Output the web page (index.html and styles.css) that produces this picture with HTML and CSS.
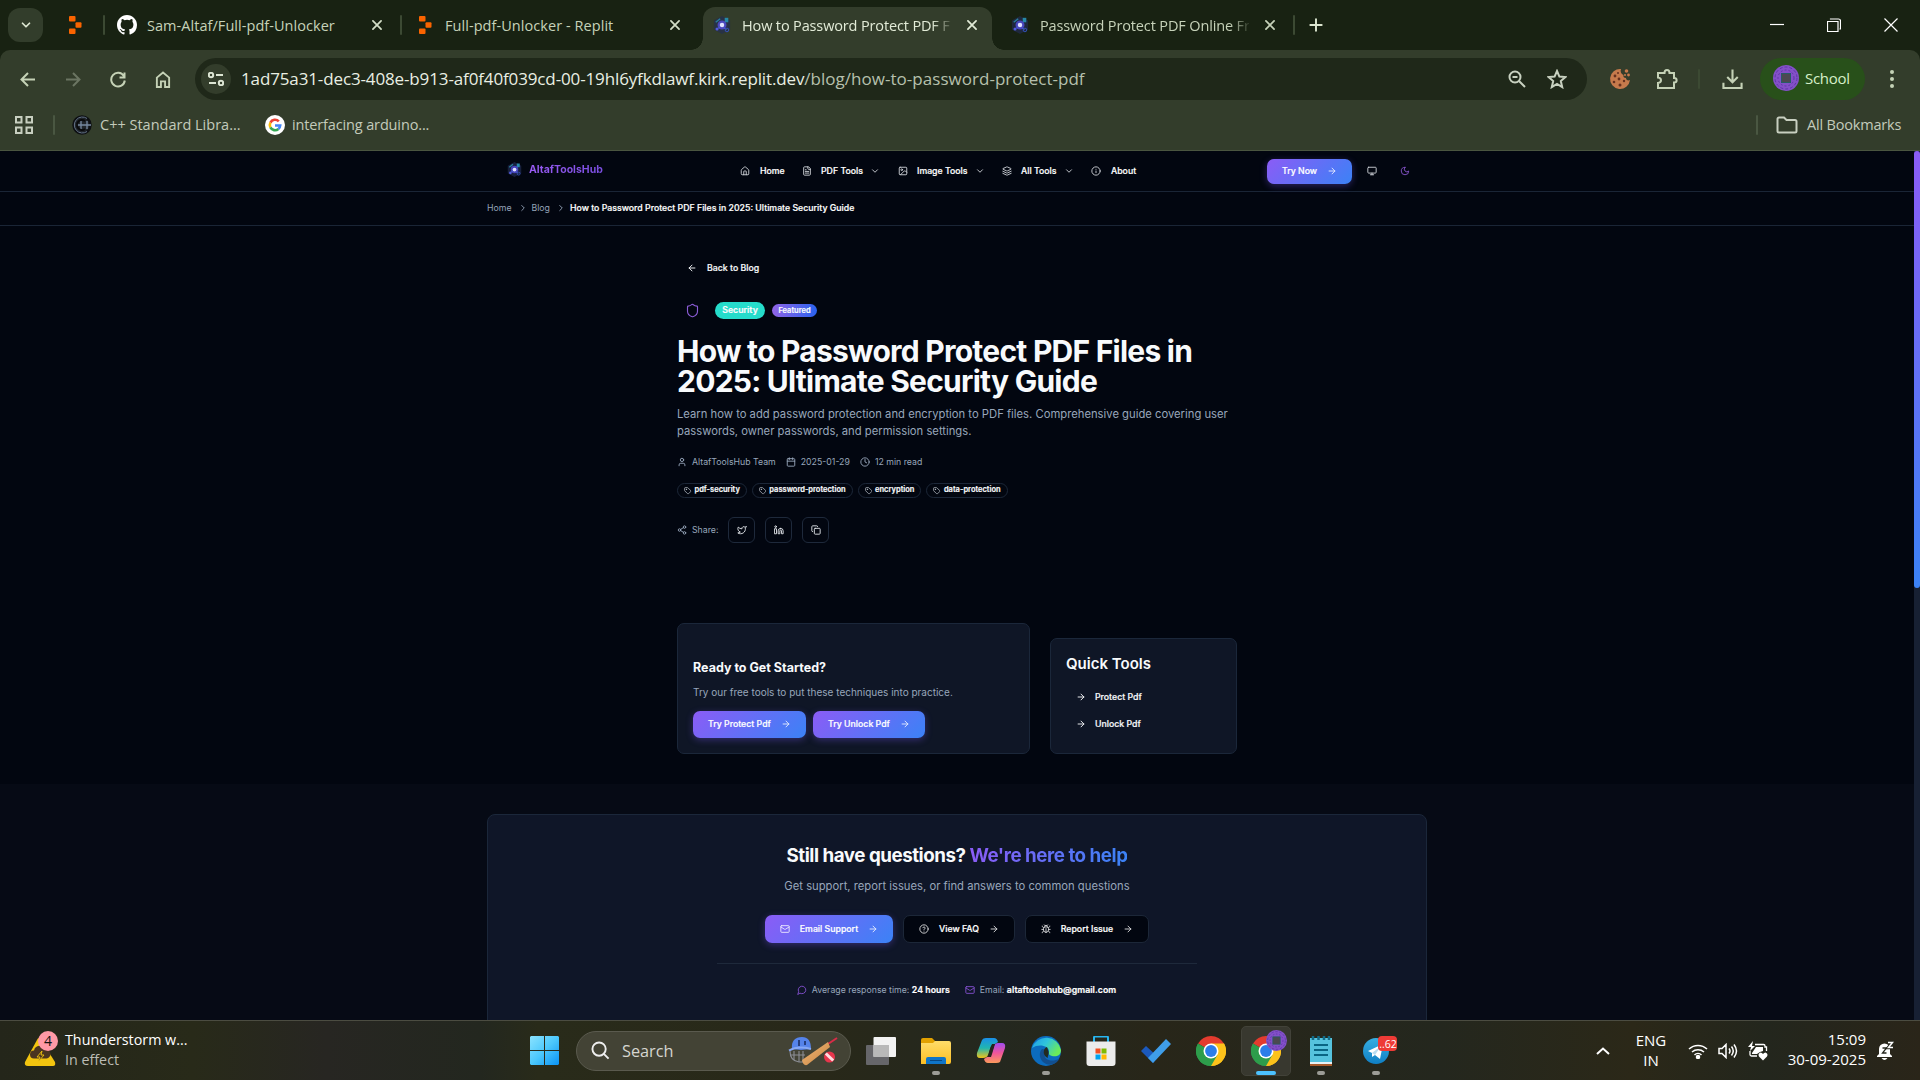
FILE: index.html
```html
<!DOCTYPE html>
<html lang="en">
<head>
<meta charset="utf-8">
<title>How to Password Protect PDF Files in 2025: Ultimate Security Guide</title>
<link rel="stylesheet" href="styles.css">
</head>
<body>
<svg class="defs" width="0" height="0">
  <defs>
    <linearGradient id="gWin" x1="0" y1="0" x2="1" y2="1"><stop offset="0" stop-color="#8be3ff"/><stop offset=".5" stop-color="#4cc8fc"/><stop offset="1" stop-color="#0a93f5"/></linearGradient>
    <linearGradient id="gFolder" x1="0" y1="0" x2="0" y2="1"><stop offset="0" stop-color="#ffdd6a"/><stop offset="1" stop-color="#fcbf24"/></linearGradient>
    <linearGradient id="gEdge" x1="0" y1="0" x2="1" y2=".5"><stop offset="0" stop-color="#1f9ae8"/><stop offset=".5" stop-color="#2fc4dc"/><stop offset="1" stop-color="#6bec5a"/></linearGradient>
    <linearGradient id="gTele" x1="0" y1="0" x2="0" y2="1"><stop offset="0" stop-color="#37aee2"/><stop offset="1" stop-color="#0f7fc4"/></linearGradient>
    <linearGradient id="gCop1" x1="0" y1="0" x2="0" y2="1"><stop offset="0" stop-color="#1a8fe8"/><stop offset=".5" stop-color="#20b6b0"/><stop offset="1" stop-color="#f0c419"/></linearGradient>
    <linearGradient id="gCop2" x1="0" y1="0" x2="0" y2="1"><stop offset="0" stop-color="#a04cf0"/><stop offset=".5" stop-color="#f0559a"/><stop offset="1" stop-color="#fb9a5c"/></linearGradient>
    <linearGradient id="gBat" x1="0" y1="0" x2="1" y2="1"><stop offset="0" stop-color="#f0b878"/><stop offset="1" stop-color="#c98440"/></linearGradient>
  </defs>
  <symbol id="arrow-r" viewBox="0 0 24 24"><path d="M5 12h14M12 5l7 7-7 7"/></symbol>
  <symbol id="arrow-l" viewBox="0 0 24 24"><path d="M19 12H5M12 19l-7-7 7-7"/></symbol>
  <symbol id="chev-d" viewBox="0 0 24 24"><path d="M6 9l6 6 6-6"/></symbol>
  <symbol id="chev-r" viewBox="0 0 24 24"><path d="M9 18l6-6-6-6"/></symbol>
  <symbol id="x" viewBox="0 0 24 24"><path d="M5 5l14 14M19 5L5 19"/></symbol>
  <symbol id="house" viewBox="0 0 24 24"><path d="M15 21v-8a1 1 0 0 0-1-1h-4a1 1 0 0 0-1 1v8"/><path d="M3 10a2 2 0 0 1 .7-1.5l7-6a2 2 0 0 1 2.6 0l7 6A2 2 0 0 1 21 10v9a2 2 0 0 1-2 2H5a2 2 0 0 1-2-2z"/></symbol>
  <symbol id="file" viewBox="0 0 24 24"><path d="M15 2H6a2 2 0 0 0-2 2v16a2 2 0 0 0 2 2h12a2 2 0 0 0 2-2V7z"/><path d="M14 2v4a2 2 0 0 0 2 2h4M10 9H8M16 13H8M16 17H8"/></symbol>
  <symbol id="image" viewBox="0 0 24 24"><rect x="3" y="3" width="18" height="18" rx="2"/><circle cx="9" cy="9" r="2"/><path d="M21 15l-3.1-3.1a2 2 0 0 0-2.8 0L6 21"/></symbol>
  <symbol id="layers" viewBox="0 0 24 24"><path d="M12.8 2.2a2 2 0 0 0-1.6 0L2.6 6.1a1 1 0 0 0 0 1.8l8.6 3.9a2 2 0 0 0 1.6 0l8.6-3.9a1 1 0 0 0 0-1.8z"/><path d="M22 17.6l-9.2 4.2a2 2 0 0 1-1.6 0L2 17.6M22 12.6l-9.2 4.2a2 2 0 0 1-1.6 0L2 12.6"/></symbol>
  <symbol id="info" viewBox="0 0 24 24"><circle cx="12" cy="12" r="10"/><path d="M12 16v-4M12 8h.01"/></symbol>
  <symbol id="monitor" viewBox="0 0 24 24"><rect x="2" y="3" width="20" height="14" rx="2"/><path d="M8 21h8M12 17v4"/></symbol>
  <symbol id="moon" viewBox="0 0 24 24"><path d="M12 3a6 6 0 0 0 9 9 9 9 0 1 1-9-9z"/></symbol>
  <symbol id="shield" viewBox="0 0 24 24"><path d="M20 13c0 5-3.5 7.5-7.7 9a1 1 0 0 1-.6 0C7.500 20.500 4 18 4 13V6a1 1 0 0 1 1-1c2 0 4.500-1.200 6.200-2.700a1.200 1.200 0 0 1 1.500 0C14.500 3.800 17 5 19 5a1 1 0 0 1 1 1z"/></symbol>
  <symbol id="user" viewBox="0 0 24 24"><path d="M19 21v-2a4 4 0 0 0-4-4H9a4 4 0 0 0-4 4v2"/><circle cx="12" cy="7" r="4"/></symbol>
  <symbol id="calendar" viewBox="0 0 24 24"><path d="M8 2v4M16 2v4M3 10h18"/><rect x="3" y="4" width="18" height="18" rx="2"/></symbol>
  <symbol id="clock" viewBox="0 0 24 24"><circle cx="12" cy="12" r="10"/><path d="M12 6v6l4 2"/></symbol>
  <symbol id="tag" viewBox="0 0 24 24"><path d="M12.600 2.600A2 2 0 0 0 11.200 2H4a2 2 0 0 0-2 2v7.200a2 2 0 0 0 .6 1.400l8.700 8.700a2.400 2.400 0 0 0 3.400 0l6.600-6.600a2.400 2.400 0 0 0 0-3.400z"/><circle cx="7.500" cy="7.500" r=".8"/></symbol>
  <symbol id="share" viewBox="0 0 24 24"><circle cx="18" cy="5" r="3"/><circle cx="6" cy="12" r="3"/><circle cx="18" cy="19" r="3"/><path d="M8.600 13.500l6.800 4M15.400 6.500l-6.800 4"/></symbol>
  <symbol id="twitter" viewBox="0 0 24 24"><path d="M22 4s-.7 2.100-2 3.400c1.600 10-9.400 17.300-18 11.600 2.200.1 4.400-.6 6-2C3 15.500.5 9.600 3 5c2.200 2.600 5.600 4.100 9 4-.9-4.200 4-6.600 7-3.800 1.100 0 3-1.200 3-1.200z"/></symbol>
  <symbol id="linkedin" viewBox="0 0 24 24"><path d="M16 8a6 6 0 0 1 6 6v7h-4v-7a2 2 0 0 0-4 0v7h-4v-7a6 6 0 0 1 6-6z"/><rect x="2" y="9" width="4" height="12"/><circle cx="4" cy="4" r="2"/></symbol>
  <symbol id="copy" viewBox="0 0 24 24"><rect x="8" y="8" width="14" height="14" rx="2"/><path d="M4 16c-1.100 0-2-.9-2-2V4c0-1.100.9-2 2-2h10c1.100 0 2 .9 2 2"/></symbol>
  <symbol id="mail" viewBox="0 0 24 24"><rect x="2" y="4" width="20" height="16" rx="2"/><path d="M22 7l-9 5.700a2 2 0 0 1-2 0L2 7"/></symbol>
  <symbol id="help" viewBox="0 0 24 24"><circle cx="12" cy="12" r="10"/><path d="M9.100 9a3 3 0 0 1 5.800 1c0 2-3 3-3 3M12 17h.01"/></symbol>
  <symbol id="bug" viewBox="0 0 24 24"><path d="M8 2l1.900 1.900M14.100 3.900L16 2M9 7.100v-1a3 3 0 1 1 6 0v1M12 20c-3.300 0-6-2.700-6-6v-3a4 4 0 0 1 4-4h4a4 4 0 0 1 4 4v3c0 3.300-2.700 6-6 6M12 20v-9M6.500 9C4.600 8.800 3 7.100 3 5M6 13H2M3 21c0-2.100 1.700-3.900 3.800-4M21 5c0 2.100-1.600 3.800-3.500 4M22 13h-4M17.200 17c2.100.1 3.800 1.900 3.800 4"/></symbol>
  <symbol id="message" viewBox="0 0 24 24"><path d="M7.900 20A9 9 0 1 0 4 16.100L2 22z"/></symbol>
  <symbol id="replit" viewBox="0 0 14 20"><g fill="#fa6400"><rect x="1" y="1" width="6.500" height="5.600" rx="1"/><rect x="7.500" y="7.200" width="6" height="5.600" rx="1"/><rect x="1" y="13.400" width="6.500" height="5.600" rx="1"/></g></symbol>
  <symbol id="hub" viewBox="0 0 20 20"><path d="M10 0l9 5v10l-9 5-9-5V5z" fill="#232c55" opacity=".65"/><path d="M13 2h4v5h-4z" fill="#2688a8"/><path d="M3 7l5-4" stroke="#287f9d" stroke-width="1.600"/><circle cx="10" cy="10" r="5" fill="#5750e8" opacity=".75"/><circle cx="10" cy="10" r="2.500" fill="#dfe2ff"/><path d="M5 14l3-2M12 13l3 2" stroke="#4761d8"/><circle cx="4.500" cy="14.500" r="1.700" fill="#525be0"/><circle cx="15.500" cy="15.500" r="2" fill="none" stroke="#3556c6"/></symbol>
  <symbol id="avatar" viewBox="0 0 26 26"><circle cx="13" cy="13" r="13" fill="#8350c8"/><g fill="none" stroke="#5f36a6" stroke-width="1"><circle cx="13" cy="13" r="11" stroke-dasharray="3 2"/><circle cx="13" cy="13" r="8" stroke-dasharray="2 2"/></g><rect x="8.500" y="8.500" width="9" height="9" fill="#4b4950" stroke="#265c66"/></symbol>
  <symbol id="chrome" viewBox="0 0 30 30"><path d="M15 15L2.010 7.500A15 15 0 0 1 27.990 7.500z" fill="#e33b2e"/><path d="M15 15L27.990 7.500A15 15 0 0 1 15 30z" fill="#fcc21b"/><path d="M15 15v15A15 15 0 0 1 2.010 7.500z" fill="#2d9d4b"/><path d="M15 7.500h13a15 15 0 0 1-13 22.500l6.500-11.250z" fill="#fcc21b"/><path d="M2 7.500L8.500 18.750 21.500 18.750 15 30A15 15 0 0 1 2 7.500z" fill="#2d9d4b"/><circle cx="15" cy="15" r="7.500" fill="#fff"/><circle cx="15" cy="15" r="5.900" fill="#2b7de9"/></symbol>
</svg>

<div class="browser">
  <header class="tabs">
    <div class="tab-search"><svg class="ic i14 w3"><use href="#chev-d"/></svg></div>
    <div class="tab pinned"><svg class="rep"><use href="#replit"/></svg></div>
    <i class="sep"></i>
    <div class="tab t1"><svg class="gh" viewBox="0 0 16 16"><path fill="#fff" d="M8 0C3.580 0 0 3.580 0 8c0 3.540 2.290 6.530 5.470 7.590.4.070.55-.17.55-.38 0-.19-.01-.82-.01-1.490-2.010.37-2.530-.49-2.690-.94-.09-.23-.48-.94-.82-1.130-.28-.15-.68-.52-.01-.53.63-.01 1.080.58 1.230.82.72 1.210 1.870.87 2.330.66.070-.52.28-.87.51-1.070-1.780-.2-3.640-.89-3.640-3.950 0-.87.31-1.590.82-2.150-.08-.2-.36-1.020.08-2.120 0 0 .67-.21 2.200.82a7.600 7.600 0 0 1 4 0c1.530-1.040 2.200-.82 2.200-.82.44 1.100.16 1.920.08 2.120.51.56.82 1.270.82 2.150 0 3.070-1.870 3.750-3.650 3.950.29.25.54.73.54 1.480 0 1.070-.01 1.930-.01 2.200 0 .21.15.46.55.38A8 8 0 0 0 16 8c0-4.420-3.580-8-8-8z"/></svg><span class="ttl a">Sam-Altaf/Full-pdf-Unlocker</span><svg class="ic i14 w3"><use href="#x"/></svg></div>
    <i class="sep"></i>
    <div class="tab t2"><svg class="rep"><use href="#replit"/></svg><span class="ttl b">Full-pdf-Unlocker - Replit</span><svg class="ic i14 w3"><use href="#x"/></svg></div>
    <div class="tab t3 active"><svg class="fav"><use href="#hub"/></svg><span class="ttl c">How to Password Protect PDF Fi</span><svg class="ic i14 w3"><use href="#x"/></svg></div>
    <div class="tab t4"><svg class="fav"><use href="#hub"/></svg><span class="ttl d">Password Protect PDF Online Fr</span><svg class="ic i14 w3"><use href="#x"/></svg></div>
    <i class="sep"></i>
    <svg class="ic plus" viewBox="0 0 16 16"><path d="M8 1.500v13M1.500 8h13"/></svg>
    <div class="wincontrols">
      <svg viewBox="0 0 14 14"><path d="M0 6.500h14"/></svg>
      <svg viewBox="0 0 14 14"><path d="M3.500 1.500V1h8a2 2 0 0 1 2 2v8h-1M.5 3.500h10.500v10H.5z"/></svg>
      <svg viewBox="0 0 14 14"><path d="M.5.5l13 13M13.500.5l-13 13"/></svg>
    </div>
  </header>

  <div class="toolbar">
    <div class="navbtns">
      <svg viewBox="0 0 16 16"><path d="M15 8H1.500M8 1.500L1.500 8 8 14.500"/></svg>
      <svg viewBox="0 0 16 16" class="dim"><path d="M1 8h13.500M8 1.500L14.500 8 8 14.500"/></svg>
      <svg viewBox="0 0 16 16"><path d="M13.800 4.500A6.800 6.800 0 1 0 14.800 9M14.500 1v5h-5"/></svg>
      <svg viewBox="0 0 16 18"><path d="M1.500 7L8 1.500 14.500 7v10h-4.300v-6H5.800v6H1.500z"/></svg>
    </div>
    <div class="omnibox">
      <div class="site"><svg viewBox="0 0 16 14"><circle cx="3" cy="3" r="2.200"/><path d="M8 3h7M1 11h7"/><circle cx="13" cy="11" r="2.200"/></svg></div>
      <div class="url">1ad75a31-dec3-408e-b913-af0f40f039cd-00-19hl6yfkdlawf.kirk.replit.dev<span>/blog/how-to-password-protect-pdf</span></div>
      <svg class="ob" viewBox="0 0 18 18"><circle cx="7" cy="7" r="5.500"/><path d="M11 11l6 6M4.500 7h5"/></svg>
      <svg class="ob star" viewBox="0 0 20 20"><path d="M10 2l2.400 5.600 6 .5-4.600 4 1.400 6L10 14.900 4.800 18.100l1.400-6-4.600-4 6-.5z"/></svg>
    </div>
    <svg class="cookie" viewBox="0 0 22 22"><path d="M12 1a10 10 0 1 0 9 11c-2 1-4 0-4-2-2 0-3-1-2.500-3C12 6 11 3 12 1z" fill="#c67a4c"/><g fill="#66311f"><circle cx="6" cy="8" r="1.400"/><circle cx="10" cy="11" r="1.400"/><circle cx="5" cy="14" r="1.300"/><circle cx="11" cy="17" r="1.500"/><circle cx="15" cy="13" r="1.200"/><circle cx="9" cy="5" r="1"/></g><g fill="#c67a4c"><circle cx="17.500" cy="3" r="1.800"/><circle cx="19.500" cy="7" r="1.400"/><circle cx="16" cy="7" r="1"/></g></svg>
    <svg class="puzzle" viewBox="0 0 22 22"><path d="M2 5h6.500c0-4 5-4 5 0H18v5c3.500 0 3.500 4.500 0 4.500V20H2v-5c4-.5 4-5 0-5.500z"/></svg>
    <i class="sep"></i>
    <svg class="dl" viewBox="0 0 22 22"><path d="M11 1v13M5.500 9l5.500 5.500L16.500 9M1.500 15v5.500h19V15"/></svg>
    <div class="profile"><svg><use href="#avatar"/></svg><span class="m">School</span></div>
    <svg class="dots" viewBox="0 0 4 18"><circle cx="2" cy="2" r="2"/><circle cx="2" cy="9" r="2"/><circle cx="2" cy="16" r="2"/></svg>
  </div>

  <div class="bookmarks">
    <svg class="apps" viewBox="0 0 18 18"><path d="M1 1h5.500v5.500H1zM11.500 1H17v5.500h-5.500zM1 11.500h5.500V17H1zM11.500 11.500H17V17h-5.500z"/></svg>
    <i class="sep"></i>
    <svg class="cpp" viewBox="0 0 20 20"><circle cx="10" cy="10" r="8.500" fill="#20252a" stroke="#0e1013" stroke-width="2.500"/><path d="M15 3.500a8 8 0 1 0 0 13" fill="none" stroke="#65758b" stroke-width="1"/><path d="M4 10h15M9 6v8M15 6v8" stroke="#7688a0" stroke-width="1.300"/><path d="M13 6a5 5 0 1 0 0 8" fill="none" stroke="#090a0c" stroke-width="2"/></svg>
    <span class="bm1">C++ Standard Libra...</span>
    <svg class="goog" viewBox="0 0 20 20"><circle cx="10" cy="10" r="10" fill="#fff"/><g fill="none" stroke-width="2.600"><path d="M13.800 6.400A5.200 5.200 0 0 0 5.400 7.600" stroke="#ea4335"/><path d="M5.400 7.600a5.200 5.200 0 0 0 0 4.800" stroke="#fbbc05"/><path d="M5.400 12.400a5.200 5.200 0 0 0 8 1.600" stroke="#34a853"/><path d="M13.400 14a5.200 5.200 0 0 0 1.800-3.500H10" stroke="#4285f4"/></g></svg>
    <span class="bm2">interfacing arduino...</span>
    <i class="sep allsep"></i>
    <svg class="fold" viewBox="0 0 22 18"><path d="M1.500 3a1.500 1.500 0 0 1 1.500-1.500h5L10.500 4H19a1.500 1.500 0 0 1 1.500 1.500V15a1.500 1.500 0 0 1-1.500 1.500H3A1.500 1.500 0 0 1 1.500 15z"/></svg>
    <span class="bm3">All Bookmarks</span>
  </div>

  <main class="page">
    <nav class="sitenav">
      <div class="brand"><svg><use href="#hub"/></svg><span>AltafToolsHub</span></div>
      <div class="menu">
        <a class="n1"><svg class="ic"><use href="#house"/></svg><span>Home</span></a>
        <a class="n2"><svg class="ic"><use href="#file"/></svg><span>PDF Tools</span><svg class="ic"><use href="#chev-d"/></svg></a>
        <a class="n3"><svg class="ic"><use href="#image"/></svg><span>Image Tools</span><svg class="ic"><use href="#chev-d"/></svg></a>
        <a class="n4"><svg class="ic"><use href="#layers"/></svg><span>All Tools</span><svg class="ic"><use href="#chev-d"/></svg></a>
        <a class="n5"><svg class="ic"><use href="#info"/></svg><span>About</span></a>
      </div>
      <a class="btn grad try"><span>Try Now</span><svg class="ic"><use href="#arrow-r"/></svg></a>
      <svg class="ic mon"><use href="#monitor"/></svg>
      <svg class="ic moon"><use href="#moon"/></svg>
    </nav>
    <div class="crumbs"><span>Home</span><svg class="ic"><use href="#chev-r"/></svg><span>Blog</span><svg class="ic"><use href="#chev-r"/></svg><b>How to Password Protect PDF Files in 2025: Ultimate Security Guide</b></div>

    <article class="post">
      <a class="back"><svg class="ic"><use href="#arrow-l"/></svg><span>Back to Blog</span></a>
      <div class="badges"><svg class="ic"><use href="#shield"/></svg><span class="sec">Security</span><span class="feat">Featured</span></div>
      <h1>How to Password Protect PDF Files in<br>2025: Ultimate Security Guide</h1>
      <p class="lead">Learn how to add password protection and encryption to PDF files. Comprehensive guide covering user<br>passwords, owner passwords, and permission settings.</p>
      <div class="meta"><svg class="ic"><use href="#user"/></svg><span>AltafToolsHub Team</span><svg class="ic"><use href="#calendar"/></svg><span>2025-01-29</span><svg class="ic"><use href="#clock"/></svg><span>12 min read</span></div>
      <div class="tags">
        <span><svg class="ic"><use href="#tag"/></svg><em>pdf-security</em></span><span><svg class="ic"><use href="#tag"/></svg><em>password-protection</em></span><span><svg class="ic"><use href="#tag"/></svg><em>encryption</em></span><span><svg class="ic"><use href="#tag"/></svg><em>data-protection</em></span>
      </div>
      <div class="share"><svg class="ic"><use href="#share"/></svg><span>Share:</span><a><svg class="ic"><use href="#twitter"/></svg></a><a><svg class="ic"><use href="#linkedin"/></svg></a><a><svg class="ic"><use href="#copy"/></svg></a></div>
      <div class="cards">
        <section class="card ready">
          <h3>Ready to Get Started?</h3>
          <p>Try our free tools to put these techniques into practice.</p>
          <div class="row"><a class="btn grad"><span>Try Protect Pdf</span><svg class="ic"><use href="#arrow-r"/></svg></a><a class="btn grad"><span>Try Unlock Pdf</span><svg class="ic"><use href="#arrow-r"/></svg></a></div>
        </section>
        <section class="card quick">
          <h3>Quick Tools</h3>
          <a><svg class="ic"><use href="#arrow-r"/></svg><span>Protect Pdf</span></a>
          <a><svg class="ic"><use href="#arrow-r"/></svg><span>Unlock Pdf</span></a>
        </section>
      </div>
    </article>

    <section class="support">
      <div class="panel">
        <h2><span>Still have questions?</span> <span class="gt">We're here to help</span></h2>
        <p>Get support, report issues, or find answers to common questions</p>
        <div class="actions">
          <a class="btn grad"><svg class="ic"><use href="#mail"/></svg><span>Email Support</span><svg class="ic"><use href="#arrow-r"/></svg></a>
          <a class="btn dark"><svg class="ic"><use href="#help"/></svg><span>View FAQ</span><svg class="ic"><use href="#arrow-r"/></svg></a>
          <a class="btn dark"><svg class="ic"><use href="#bug"/></svg><span>Report Issue</span><svg class="ic"><use href="#arrow-r"/></svg></a>
        </div>
        <div class="contact">
          <svg class="ic"><use href="#message"/></svg><span>Average response time: <b>24 hours</b></span><svg class="ic"><use href="#mail"/></svg><span>Email: <b>altaftoolshub@gmail.com</b></span>
        </div>
      </div>
    </section>
    <div class="scroll"><i></i></div>
  </main>
</div>

<footer class="taskbar">
  <div class="weather">
    <svg viewBox="0 0 34 36"><path d="M13.500 8q1.500-2 3 0L31 31q1 4-2 4H4q-4 0-3-4z" fill="#f2c40f"/><path d="M10 27.500a4 4 0 0 1 0-8 6 6 0 0 1 11.500-1 4.500 4.500 0 0 1 1 9z" fill="#4a3420"/><path d="M18 20l-5 6h3l-2 5 6-7h-3z" fill="#4a3420" stroke="#f2c40f" stroke-width=".9"/><circle cx="24" cy="10" r="10" fill="#ff99a6"/><text x="24" y="15">4</text></svg>
    <div><span class="w1">Thunderstorm w...</span><span class="w2">In effect</span></div>
  </div>
  <svg class="start" viewBox="0 0 29 29"><g fill="url(#gWin)"><path d="M1 0h13v14H0V1zM15 0h13l1 1v13H15zM0 15h14v14H1l-1-1zM15 15h14v13l-1 1H15z"/></g></svg>
  <div class="search"><svg class="mag" viewBox="0 0 20 20"><circle cx="8.500" cy="8.500" r="7"/><path d="M13.500 13.500l5 5"/></svg><span>Search</span>
    <svg class="cricket" viewBox="0 0 50 30"><g fill="none" stroke="#8b8d94" stroke-width="1.100"><path d="M2 15q0 10 9 11h5"/><path d="M2 19h15M6 15v9M11 15v11M15 15v11"/></g><path d="M4 13C3 5 7 1 14 1c6 0 9 4 9 12l-10 1z" fill="#5583ea"/><path d="M1 14.500q9-5 22-1.500" stroke="#86a8f6" stroke-width="2" fill="none"/><path d="M11 4v6M17 5v4" stroke="#16295e" stroke-width="1.500"/><path d="M40 8l9-6" stroke="#d82c48" stroke-width="2"/><path d="M40 6l2 5-23 18q-4 1-5-5z" fill="url(#gBat)"/><circle cx="41.500" cy="21" r="5.500" fill="#e7354c"/><path d="M37.800 17.500l7.400 7" stroke="#ffdce0" stroke-width="3"/></svg>
  </div>
  <div class="apps-row">
    <div><svg viewBox="0 0 30 30"><rect y="9" width="23" height="20" rx="1" fill="#66666a"/><rect x="7.500" y="1" width="22.500" height="20" rx="1" fill="#f3f3f3"/><rect x="7.500" y="9" width="15.500" height="12" fill="#b9b9b9"/></svg></div>
    <div class="run"><svg viewBox="0 0 30 30"><path d="M0 4a2 2 0 0 1 2-2h9l3 3v6H0z" fill="#e2a100"/><path d="M0 7h12l2-2h14a2 2 0 0 1 2 2v19a2 2 0 0 1-2 2H0z" fill="url(#gFolder)"/><path d="M5 28v-5a2 2 0 0 1 2-2h16a2 2 0 0 1 2 2v5z" fill="#0f75c8"/><path d="M9 24.500h12" stroke="#064784"/></svg></div>
    <div><svg viewBox="0 0 30 30"><path d="M6 4q1-2 4-2h8q3 0 4 4l-3 2q-4 0-5 5l-2 6q-1 3-5 3H4q-4 0-3-5z" fill="url(#gCop1)"/><path d="M24 26q-1 1-4 1h-8q-3 0-4-4l3-2q4 0 5-5l2-6q1-3 4-3h4q4 0 3 5z" fill="url(#gCop2)"/><path d="M14 13l2-5h3l-3 10-1 3h-3z" fill="#25261e"/></svg></div>
    <div class="run"><svg viewBox="0 0 30 30"><circle cx="15" cy="15" r="15" fill="#0c6cbf"/><path d="M1 12A15 15 0 0 1 30 14c0 6-5 7-9 6-4-1-3-3-3-5 0-5-10-8-17-3z" fill="url(#gEdge)"/><path d="M11 13c-5 5-1 17 10 15.500 4-1 6-3 7.500-6-7 4-16 2-15-5 0-2 1-3 2-4z" fill="#124f8f"/><path d="M16 11c-4 1-5 9 1 11-1-2 2-4 0-8z" fill="#222a20"/></svg></div>
    <div><svg viewBox="0 0 30 30"><path d="M8 6V1.500q0-1 1-1h12q1 0 1 1V6" fill="none" stroke="#27b5f0" stroke-width="2"/><path d="M.5 5.500h29V27a3 3 0 0 1-3 3h-23a3 3 0 0 1-3-3z" fill="#ececec"/><path d="M9.500 12.500h5v5h-5z" fill="#f25022"/><path d="M15.500 12.500h5v5h-5z" fill="#7fba00"/><path d="M9.500 18.500h5v5h-5z" fill="#00a4ef"/><path d="M15.500 18.500h5v5h-5z" fill="#ffb900"/></svg></div>
    <div><svg viewBox="0 0 30 30"><path d="M0 15l5-5 12 11-5 6z" fill="#1b59bd"/><path d="M7 22L25 3l5 5-18 19z" fill="#3f9eea"/></svg></div>
    <div><svg><use href="#chrome"/></svg></div>
    <div class="run cur"><svg viewBox="0 0 36 36" class="over"><use href="#chrome" x="0" y="6" width="30" height="30"/><use href="#avatar" x="15" y="0" width="21" height="21"/></svg></div>
    <div class="run"><svg viewBox="0 0 30 30"><path d="M4 26h22v4H4z" fill="#a85a2a"/><path d="M4 25h22v3H4z" fill="#e8f1f4"/><path d="M4 2h22v24H4z" fill="#56c3de"/><path d="M8 9h14M8 14h14M8 19h14" stroke="#0a6583" stroke-width="1.800"/><path d="M7 0v4M12.500 0v4M18 0v4M23 0v4" stroke="#126c88" stroke-width="2.500"/></svg></div>
    <div class="run"><svg viewBox="0 0 36 30" class="tele"><circle cx="13" cy="15" r="13" fill="url(#gTele)"/><path d="M5 15l15-7-3 15-5-4-3 2v-4z" fill="#fff"/><path d="M9 17l9-7-6 9" fill="#b9dcf0"/><rect x="15" y="0" width="19" height="15" rx="4" fill="#ee3b36"/><text x="25" y="11.500">..62</text></svg></div>
  </div>
  <div class="tray">
    <svg class="up" viewBox="0 0 14 8"><path d="M1 7l6-5.500L13 7"/></svg>
    <div class="lang"><span>ENG</span><span>IN</span></div>
    <svg class="wifi" viewBox="0 0 20 16"><path d="M1 6a13 13 0 0 1 18 0M4 9a9 9 0 0 1 12 0M6.500 12a5 5 0 0 1 7 0"/><circle cx="10" cy="14" r="1.500" fill="#fff"/></svg>
    <svg class="spk" viewBox="0 0 20 16"><path d="M1 5.500v5h3l4 4v-13l-4 4zM11 5.500q2 2.500 0 5M13.500 3.500q3.500 4.500 0 9M16 1.500q5 6.500 0 13"/></svg>
    <svg class="bat" viewBox="0 0 20 20"><path d="M7 3.500h8.500a1.500 1.500 0 0 1 1.500 1.500v1h1.500v4M2 10v3.500A1.500 1.500 0 0 0 3.500 15H9" stroke-width="1.300"/><path d="M8 6h7v4l-3 1-3 2H4v-1z" fill="#fff" stroke="none"/><path d="M5 0L0 6h3L2 10l5-5H4z" fill="#fff" stroke="none"/><path d="M15 19.500l-4-4q-1.500-3 1.500-4 1.500 0 2.500 1.500 1-1.500 2.500-1.500 3 1 1.500 4z" fill="#fff" stroke="none"/></svg>
    <div class="time"><span>15:09</span><span>30-09-2025</span></div>
    <svg class="bell" viewBox="0 0 18 20"><path d="M1 15l2-2V8a5.500 5.500 0 0 1 11 0v5l2 2v1H1zM5.500 17h6q-3 4-6 0z" fill="#fff"/><path d="M6.500 7h4l-4 5h4" stroke="#26271e" stroke-width="1.300" fill="none"/><path d="M12 1.500h4.500l-4 5H17" stroke="#26271e" stroke-width="3.500" fill="none"/><path d="M12 1.500h4.500l-4 5H17" stroke="#fff" stroke-width="1.500" fill="none"/></svg>
  </div>
</footer>
</body>
</html>
```
FILE: styles.css
```css
* { box-sizing: border-box; }
body { margin: 0; width: 1920px; height: 1080px; overflow: hidden; background: #020610; font-family: "Open Sans", "Noto Sans", sans-serif; }
h1, h2, h3, p { margin: 0; }
svg { display: block; flex: none; }
span, b, em { white-space: nowrap; }
.defs { position: absolute; }
.ic { width: 10px; height: 10px; fill: none; stroke: currentColor; stroke-width: 2.2; stroke-linecap: round; stroke-linejoin: round; }
.i14 { width: 14px; height: 14px; }
.w3 { stroke-width: 3; }
.sep { flex: none; width: 2px; height: 20px; border-radius: 1px; background: #3c4a33; }
.browser { height: 1020px; display: flex; flex-direction: column; background: #182212; }

/* tab strip */
.tabs { height: 50px; background: #182212; display: flex; align-items: center; flex: none; color: #c6d2b9; font-size: 14.5px; }
.tab-search { width: 35px; height: 34px; margin-left: 8px; border-radius: 12px; background: #323d2b; display: grid; place-items: center; color: #dce6d0; }
.rep { width: 14px; height: 20px; }
.tab { height: 50px; display: flex; align-items: center; flex: none; }
.pinned { width: 60px; padding-left: 25px; }
.t1 { width: 295px; padding-left: 12px; }
.t2 { width: 301px; padding-left: 16px; }
.t3 { width: 289px; height: 43px; margin-top: 7px; padding: 0 0 7px 10px; }
.t4 { width: 301px; padding-left: 19px; }
.gh { width: 20px; height: 20px; }
.fav { width: 18px; height: 20px; }
.ttl { flex: none; }
.a { margin-left: 10px; width: 223px; letter-spacing: .05px; }
.b { margin-left: 13px; width: 223px; letter-spacing: .06px; }
.c, .d { margin-left: 11px; width: 209px; margin-right: 14px; letter-spacing: -.14px; mask-image: linear-gradient(90deg, #000 190px, transparent 212px); }
.t2 .ic, .t1 .ic { color: #d3dec7; }
.active { position: relative; background: #333d2b; border-radius: 12px 12px 0 0; color: #e2ebd7; }
.active::before, .active::after { content: ""; position: absolute; bottom: 0; width: 12px; height: 12px; }
.active::before { left: -12px; background: radial-gradient(circle at 0 0, transparent 11.5px, #333d2b 12px); }
.active::after { right: -12px; background: radial-gradient(circle at 100% 0, transparent 11.5px, #333d2b 12px); }
.plus { width: 14px; height: 14px; margin-left: 14px; color: #dce6d0; }
.wincontrols { margin-left: auto; display: flex; gap: 43px; padding-right: 22px; }
.wincontrols svg { width: 14px; height: 14px; fill: none; stroke: #fff; stroke-width: 1.2; }

/* address bar */
.toolbar { height: 50px; flex: none; background: #333d2b; border-radius: 10px 10px 0 0; display: flex; align-items: center; padding-top: 8px; }
.navbtns { width: 195px; padding-left: 20px; display: flex; gap: 29px; }
.navbtns svg { width: 16px; height: 17px; fill: none; stroke: #c5d2b6; stroke-width: 2; }
.navbtns .dim { stroke: #6b7562; }
.omnibox { width: 1392px; height: 42px; border-radius: 21px; background: #1f2819; display: flex; align-items: center; padding-left: 6px; }
.site { width: 30px; height: 30px; border-radius: 50%; background: #333d2b; display: grid; place-items: center; }
.site svg { width: 16px; height: 14px; fill: none; stroke: #dce5d3; stroke-width: 2; }
.url { margin-left: 10px; width: 1267px; white-space: nowrap; color: #e9efe3; font-size: 17px; letter-spacing: -.13px; padding-bottom: 1px; }
.url span { color: #b6c0ad; letter-spacing: .03px; }
.ob { width: 18px; height: 18px; fill: none; stroke: #c8d1c0; stroke-width: 2; }
.star { width: 20px; height: 20px; margin-left: 21px; }
.cookie { width: 22px; height: 22px; margin-left: 22px; }
.puzzle { width: 22px; height: 22px; margin-left: 25px; fill: none; stroke: #c5d2b6; stroke-width: 2; }
.toolbar .sep { margin-left: 20px; }
.dl { width: 21px; height: 22px; margin-left: 22px; fill: none; stroke: #c5d2b6; stroke-width: 2.2; }
.profile { margin-left: 17px; width: 105px; height: 42px; border-radius: 21px; background: #28501a; display: flex; align-items: center; padding: 0 0 2px 13px; color: #d6efc8; font-size: 15px; letter-spacing: -.3px; }
.profile svg { width: 26px; height: 26px; margin-right: 6px; }
.dots { width: 4px; height: 18px; margin-left: 25px; fill: #c5d2b6; }

/* bookmarks bar */
.bookmarks { height: 51px; flex: none; background: #333d2b; border-bottom: 1px solid #4a5540; display: flex; align-items: center; color: #c3cbbb; font-size: 14.5px; }
.bookmarks span { padding-bottom: 1px; }
.apps { width: 18px; height: 18px; margin-left: 15px; fill: none; stroke: #c8cfc0; stroke-width: 2; }
.bookmarks .sep { margin-left: 20px; background: #4a5742; }
.cpp { width: 20px; height: 20px; margin-left: 17px; }
.bm1 { margin-left: 8px; width: 165px; }
.goog { width: 20px; height: 20px; }
.bm2 { margin-left: 7px; width: 160px; letter-spacing: -.14px; }
.bookmarks .allsep { margin-left: auto; }
.fold { width: 22px; height: 18px; margin: 0 9px 0 18px; fill: none; stroke: #c8cfc0; stroke-width: 2; }
.bm3 { width: 113px; letter-spacing: -.18px; }

/* site */
.page { height: 869px; flex: none; position: relative; background: #020610; font-family: Inter, sans-serif; font-size: 8.75px; color: #f8fafc; overflow: hidden; }
.menu, .btn, .crumbs b, .back, .quick a, .contact b, .sec, .feat, .tags em { -webkit-text-stroke: .2px currentColor; }
.sitenav { height: 41px; border-bottom: 1px solid #1a2536; display: flex; align-items: center; padding-left: 507px; font-weight: 500; }
.brand { display: flex; align-items: center; width: 232px; padding-bottom: 4px; }
.brand svg { width: 15px; height: 15px; margin-right: 7px; }
.brand span { font-size: 10.5px; font-weight: 700; background: linear-gradient(90deg, #9a5cf5, #7a4ee0); -webkit-background-clip: text; background-clip: text; color: transparent; }
.menu { display: flex; width: 528px; }
.menu a { display: flex; align-items: center; flex: none; color: #fff; }
.menu .ic { color: #cfd2d8; }
.menu span { margin-left: 9px; }
.menu .n1 span, .menu .n5 span { margin-left: 10px; }
.menu span + .ic { margin-left: auto; }
.n1 { width: 63px; padding-left: 1px; }
.n2 { width: 78px; }
.n3 { width: 87px; margin-left: 18px; }
.n4 { width: 72px; margin-left: 17px; }
.n5 { margin-left: 17px; }
.btn { display: flex; align-items: center; font-weight: 500; border-radius: 7px; color: #fff; font-size: 8.75px; }
.btn .ic { opacity: .85; }
.grad { background: linear-gradient(135deg, #8b5cf6, #3b82f6); box-shadow: 0 2px 7px rgba(120, 90, 246, .35); }
.try { width: 85px; height: 25px; padding: 0 15px; justify-content: space-between; }
.mon { color: #cfd2d8; margin-left: 15px; }
.moon { color: #8553c9; margin-left: 23px; }
.crumbs { height: 34px; border-bottom: 1px solid #1a2536; display: flex; align-items: center; padding: 0 0 2px 487px; color: #94a3b8; }
.crumbs .ic { margin: 0 4px 0 6px; }
.crumbs b { font-weight: 500; color: #fff; }

.post { width: 560px; margin-left: 677px; height: 558px; padding-top: 30px; }
.back { display: flex; align-items: center; height: 24px; padding-left: 10px; font-weight: 500; gap: 10px; color: #f8fafc; }
.badges { display: flex; align-items: center; height: 20px; margin-top: 20px; padding-left: 8px; }
.badges .ic { width: 15px; height: 15px; color: #8b5cd6; stroke-width: 1.8; margin-right: 15px; }
.sec { width: 50px; height: 17px; line-height: 16px; border-radius: 9px; background: #25dccb; text-align: center; font-weight: 600; margin-right: 7px; }
.feat { width: 45px; height: 13px; line-height: 13px; border-radius: 7px; background: linear-gradient(90deg, #9064e6, #2a62ee); text-align: center; font-size: 7.5px; font-weight: 600; }
h1 { margin-top: 16px; font-size: 30px; line-height: 30px; font-weight: 700; letter-spacing: -.75px; white-space: nowrap; }
.lead { margin-top: 10px; font-size: 11.25px; line-height: 17px; color: #98a6bb; white-space: nowrap; }
.meta { display: flex; align-items: center; height: 14px; margin-top: 15px; color: #98a6bb; }
.meta .ic { margin-right: 5px; }
.meta span { margin-right: 10px; }
.tags { display: flex; gap: 5px; height: 15px; margin-top: 14px; }
.tags > span { display: flex; align-items: center; height: 15px; border: 1px solid #1c2738; border-radius: 8px; padding: 0 6px 1px; }
.tags em { font: 600 7.5px Inter, sans-serif; padding-bottom: 1px; }
.tags .ic { width: 7.5px; height: 7.5px; margin: 2px 3px 0 0; color: #cbd0d8; }
.share { display: flex; align-items: center; height: 26px; margin-top: 19px; color: #98a6bb; }
.share > .ic { margin-right: 5px; }
.share span { width: 36px; }
.share a { width: 27px; height: 26px; border: 1px solid #1e293b; border-radius: 6px; margin-right: 10px; display: grid; place-items: center; color: #e3e6ea; }
.cards { display: flex; align-items: flex-end; gap: 20px; margin-top: 80px; }
.card { border: 1px solid #1b273a; border-radius: 7px; background: #0f1626; padding: 0 15px; }
.ready { width: 353px; height: 131px; padding-top: 36px; }
.ready h3 { font-size: 12.5px; line-height: 16px; font-weight: 700; letter-spacing: 0; }
.ready p { font-size: 10px; line-height: 16px; margin-top: 8px; color: #98a6bb; }
.row { display: flex; gap: 7px; margin-top: 11px; }
.row .btn { width: 113px; height: 27px; padding: 0 15px 1px; justify-content: space-between; }
.row .btn + .btn { width: 112px; }
.quick { width: 187px; height: 116px; padding: 16px 14px 0 15px; }
.quick h3 { font-size: 15px; line-height: 18px; font-weight: 600; margin-bottom: 10px; }
.quick a { display: flex; align-items: center; height: 27px; padding-left: 10px; gap: 9px; font-weight: 500; }

.support { background: #060a15; height: 240px; padding: 30px 493px 0 487px; }
.panel { width: 940px; height: 230px; border: 1px solid #1b273a; border-radius: 8px 8px 0 0; background: #0f1628; padding-top: 29px; display: flex; flex-direction: column; align-items: center; }
h2 { font-size: 18.75px; line-height: 24px; font-weight: 700; letter-spacing: -.47px; }
.gt { background: linear-gradient(90deg, #8b5cf6, #3b82f6); -webkit-background-clip: text; background-clip: text; color: transparent; }
.panel p { font-size: 11.25px; line-height: 18px; margin-top: 9px; color: #98a6bb; }
.actions { display: flex; gap: 10px; margin-top: 20px; }
.actions .btn { height: 28px; padding: 0 15px; width: 128px; justify-content: space-between; }
.actions .dark { width: 112px; background: #020610; border: 1px solid #1c2738; }
.actions .dark + .dark { width: 124px; }
.contact { width: 480px; margin-top: 20px; border-top: 1px solid #1e293b; height: 52px; display: flex; align-items: center; justify-content: center; color: #98a6bb; padding-right: 1px; }
.contact .ic { color: #8350cf; margin-right: 5px; }
.contact span + .ic { margin-left: 15px; }
.contact b { color: #fff; font-weight: 600; letter-spacing: .04px; }
.scroll { position: absolute; right: 0; top: 0; width: 6px; height: 869px; background: #172033; }
.scroll i { display: block; height: 437px; border-radius: 3px; background: linear-gradient(#8b5cf6, #3b82f6); }

/* taskbar */
.taskbar { height: 60px; border-top: 1px solid #4b4c41; background: linear-gradient(90deg, #24261a 0, #282a19 10%, #272622 17%, #23271f 25%, #292b1a 28%, #282819 43%, #24281f 52%, #282619 60%, #24271e 75%, #2b2818 85%, #23261d 92%, #2a2519 100%); display: flex; align-items: center; color: #fff; font-size: 15px; }
.taskbar span { display: block; line-height: 20px; }
.taskbar .lang, .weather div { padding-bottom: 2px; }
.taskbar .time { padding-bottom: 3px; }
.weather { display: flex; align-items: center; width: 530px; padding-left: 24px; }
.weather svg { width: 34px; height: 36px; margin: -4px 7px 0 0; }
.weather text { font-size: 14px; fill: #111; text-anchor: middle; }
.w1, .w2 { font-size: 14.3px; }
.w2 { color: #bcbcb4; }
.start { width: 29px; height: 29px; }
.search { width: 275px; height: 40px; border-radius: 20px; margin-left: 17px; background: #434335; border: 1px solid #5a5a4e; display: flex; align-items: center; padding-left: 14px; color: #d6d6d0; font-size: 16.3px; }
.mag { width: 19px; height: 19px; margin-right: 12px; fill: none; stroke: #eee; stroke-width: 2; }
.search span { width: 166px; }
.cricket { width: 50px; height: 30px; }
.apps-row { display: flex; margin-left: 5px; }
.apps-row div { width: 50px; height: 50px; margin-right: 5px; border-radius: 5px; display: grid; place-items: center; position: relative; border: 1px solid transparent; }
.apps-row svg { width: 30px; height: 30px; }
.apps-row .over { width: 36px; height: 36px; margin: -6px 0 0 6px; }
.apps-row .tele { width: 36px; margin-left: 10px; }
.tele text { font-size: 10.5px; fill: #fff; text-anchor: middle; }
.run::after { content: ""; position: absolute; bottom: 0; left: 20px; width: 8px; height: 4px; border-radius: 2px; background: #9c9c96; }
.apps-row .cur { background: #38382f; border-color: #424239; }
.cur::after { left: 14px; width: 20px; background: #4cc2ff; }
.tray { margin-left: auto; display: flex; align-items: center; padding-right: 26px; }
.tray svg { fill: none; stroke: #fff; stroke-width: 1.5; }
.up { width: 14px; height: 8px; }
.tray .up { stroke-width: 2; }
.lang { width: 40px; margin-left: 21px; text-align: center; }
.wifi { width: 20px; height: 16px; margin-left: 17px; }
.spk { width: 20px; height: 16px; margin-left: 10px; }
.bat { width: 20px; height: 20px; margin-left: 10px; }
.time { width: 90px; margin-left: 8px; text-align: right; }
.bell { width: 18px; height: 20px; margin-left: 10px; }
.tray .bell { stroke: none; }
```
